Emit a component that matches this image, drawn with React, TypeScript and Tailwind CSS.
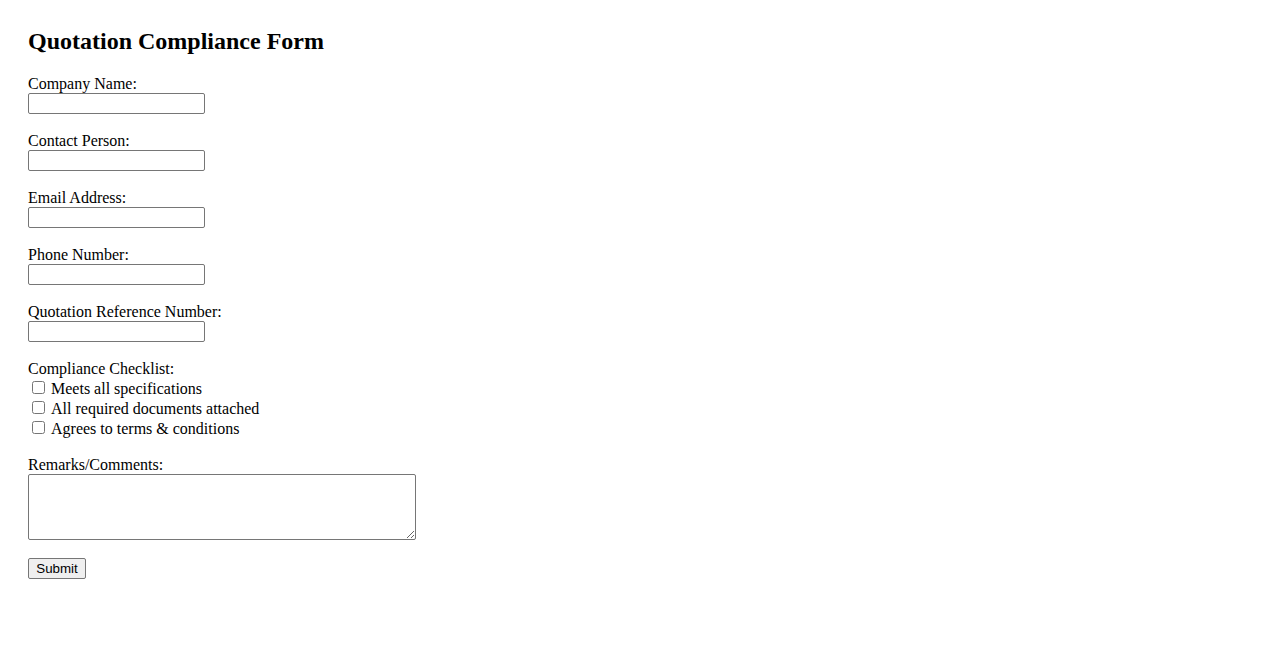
import React from "react";

const fields = [
  "Company Name:",
  "Contact Person:",
  "Email Address:",
  "Phone Number:",
  "Quotation Reference Number:",
];

const checks = [
  "Meets all specifications",
  "All required documents attached",
  "Agrees to terms & conditions",
];

const App = () => {
  return (
    <div className="min-h-[650px] bg-white px-[28px] pt-[27px] text-black font-['Liberation_Serif',serif] text-[16px] leading-[18px]">
      <h2 className="text-[24px] font-bold leading-[28px] mb-[20px]">Quotation Compliance Form</h2>
      <form>
        {fields.map((f) => (
          <div key={f} className="mb-[18px]">
            <label className="block h-[18px]">{f}</label>
            <input
              type="text"
              className="block w-[177px] h-[21px] border border-[#767676] rounded-[2px] px-[2px] text-[13.33px] font-['Liberation_Sans',sans-serif]"
            />
          </div>
        ))}
        <div className="mb-[18px]">
          <label className="block h-[18px]">Compliance Checklist:</label>
          {checks.map((c) => (
            <label key={c} className="flex items-center h-[20px]">
              <input type="checkbox" className="w-[13px] h-[13px] ml-[4px] mr-[6px] mt-[-2px]" />
              <span className="mt-[2px]">{c}</span>
            </label>
          ))}
        </div>
        <div className="mb-[18px]">
          <label className="block h-[18px]">Remarks/Comments:</label>
          <textarea className="block w-[388px] h-[66px] border border-[#767676] rounded-[2px] p-[2px] text-[13.33px] font-['Liberation_Mono',monospace]" />
        </div>
        <button
          type="button"
          className="block h-[21px] w-[58px] bg-[#efefef] border border-[#767676] rounded-[2px] text-[13.33px] leading-[15px] font-['Liberation_Sans',sans-serif]"
        >
          Submit
        </button>
      </form>
    </div>
  );
};

export default App;
